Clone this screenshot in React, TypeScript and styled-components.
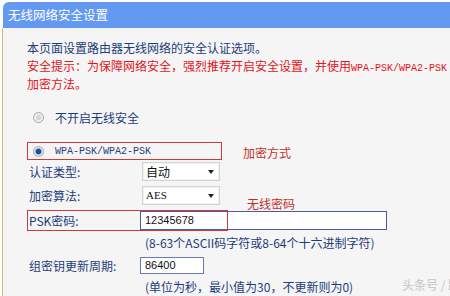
import React from 'react';
import styled, { createGlobalStyle } from 'styled-components';

const GlobalStyle = createGlobalStyle`
  html, body {
    margin: 0;
    padding: 0;
    background: #f5f5f5;
    overflow: hidden;
  }
  body {
    width: 450px;
    height: 296px;
    font-family: "Noto Sans CJK SC", "Noto Sans", sans-serif;
    font-size: 12px;
  }
`;

const Frame = styled.div`
  position: relative;
  width: 450px;
  height: 296px;
  padding: 2px 0 0 2px;
  box-sizing: border-box;
  overflow: hidden;
  background: #ffffff;
`;

const Header = styled.div`
  height: 26px;
  margin-left: 1px;
  padding-left: 5px;
  background: #6399f1;
  border-top-left-radius: 6px;
  color: #ffffff;
  line-height: 26px;
  font-size: 12.5px;
  white-space: nowrap;
`;

const Body = styled.div`
  height: 268px;
  border-left: 1px solid #d8b870;
  background: #f5f5f5;
  padding: 11px 0 0 24px;
  box-sizing: border-box;
  color: #1e3c7a;
`;

const Line = styled.div<{ $red?: boolean }>`
  line-height: 18px;
  height: 18px;
  white-space: nowrap;
  color: ${p => (p.$red ? '#e2141c' : '#1e3c7a')};
`;

const Mono = styled.span`
  font-family: "Liberation Mono", monospace;
  font-size: 10px;
`;

const RadioRow = styled.div<{ $top: number }>`
  display: flex;
  align-items: center;
  margin-top: ${p => p.$top}px;
  height: 18px;
`;

const Radio = styled.span<{ $checked?: boolean }>`
  display: inline-block;
  box-sizing: border-box;
  width: 11px;
  height: 11px;
  border-radius: 50%;
  border: 1px solid #a8a8a8;
  background: ${p =>
    p.$checked
      ? 'radial-gradient(circle, #1d4f9a 0 2.5px, #7fa6d6 3px, #e6e6e6 3.5px)'
      : 'radial-gradient(circle, #d6d6d6 0 2.5px, #eeeeee 3px)'};
  margin-right: 11px;
  flex-shrink: 0;
`;

const Marked = styled.div`
  display: flex;
  align-items: center;
  box-sizing: border-box;
  width: 195px;
  height: 18px;
  padding-left: 5px;
  border: 1px solid #c83c3c;
`;

const Note = styled.span<{ $left?: number }>`
  color: #c0302a;
  margin-left: ${p => p.$left ?? 0}px;
  padding-top: 3px;
  white-space: nowrap;
`;

const FormRow = styled.div<{ $top: number; $height: number }>`
  position: relative;
  display: flex;
  align-items: center;
  margin-top: ${p => p.$top}px;
  height: ${p => p.$height}px;
`;

const Label = styled.span`
  width: 113px;
  padding-left: 2px;
  box-sizing: border-box;
  flex-shrink: 0;
  white-space: nowrap;
`;

const FakeSelect = styled.div<{ $mono?: boolean }>`
  position: relative;
  box-sizing: border-box;
  width: 78px;
  height: 19px;
  margin-left: 2px;
  padding-left: 3px;
  background: #ffffff;
  border: 1px solid #d4d4d4;
  box-shadow: inset 0 0 0 1px #f0f0f0;
  color: #111111;
  line-height: 17px;
  font-family: ${p => (p.$mono ? '"Liberation Serif", serif' : 'inherit')};
  font-size: ${p => (p.$mono ? '11px' : '12px')};

  &::after {
    content: '';
    position: absolute;
    right: 5px;
    top: 7px;
    border-left: 3.5px solid transparent;
    border-right: 3.5px solid transparent;
    border-top: 4px solid #222222;
  }
`;

const TextBox = styled.div<{ $width: number; $height: number; $border: string }>`
  box-sizing: border-box;
  width: ${p => p.$width}px;
  height: ${p => p.$height}px;
  padding-left: 4px;
  background: #ffffff;
  border: 1px solid ${p => p.$border};
  color: #111111;
  font-family: "Liberation Sans", sans-serif;
  font-size: 11px;
  line-height: ${p => p.$height - 2}px;
`;

const Highlight = styled.div`
  position: absolute;
  left: 0;
  top: 0;
  width: 201px;
  height: 21px;
  box-sizing: border-box;
  border: 1px solid #c83c3c;
  pointer-events: none;
`;

const FloatNote = styled.span`
  position: absolute;
  left: 220px;
  top: -15px;
  color: #c0302a;
  white-space: nowrap;
`;

const Hint = styled.div<{ $top: number }>`
  margin-top: ${p => p.$top}px;
  padding-left: 118px;
  line-height: 18px;
  height: 18px;
  white-space: nowrap;
`;

const Watermark = styled.span`
  position: absolute;
  left: 402px;
  bottom: 3px;
  color: #c4c4c4;
  font-size: 12px;
  white-space: nowrap;
`;

export default function App() {
  return (
    <>
      <GlobalStyle />
      <Frame>
        <Header>无线网络安全设置</Header>
        <Body>
          <Line>本页面设置路由器无线网络的安全认证选项。</Line>
          <Line $red>
            安全提示：为保障网络安全，强烈推荐开启安全设置，并使用<Mono>WPA-PSK/WPA2-PSK AES</Mono>
          </Line>
          <Line $red>加密方法。</Line>

          <RadioRow $top={15}>
            <Radio style={{ marginLeft: 6 }} />
            不开启无线安全
          </RadioRow>

          <RadioRow $top={16}>
            <Marked>
              <Radio $checked />
              <Mono>WPA-PSK/WPA2-PSK</Mono>
            </Marked>
            <Note $left={21}>加密方式</Note>
          </RadioRow>

          <FormRow $top={2} $height={19}>
            <Label>认证类型:</Label>
            <FakeSelect>自动</FakeSelect>
          </FormRow>

          <FormRow $top={5} $height={19}>
            <Label>加密算法:</Label>
            <FakeSelect $mono>AES</FakeSelect>
          </FormRow>

          <FormRow $top={5} $height={21}>
            <Label>PSK密码:</Label>
            <TextBox $width={247} $height={19} $border="#4a5a9a">12345678</TextBox>
            <Highlight />
            <FloatNote>无线密码</FloatNote>
          </FormRow>

          <Hint $top={3}>(8-63个ASCII码字符或8-64个十六进制字符)</Hint>

          <FormRow $top={5} $height={17}>
            <Label>组密钥更新周期:</Label>
            <TextBox $width={64} $height={17} $border="#6a78b8">86400</TextBox>
          </FormRow>

          <Hint $top={4}>(单位为秒，最小值为30，不更新则为0)</Hint>
        </Body>
        <Watermark>头条号 / 路由器</Watermark>
      </Frame>
    </>
  );
}
